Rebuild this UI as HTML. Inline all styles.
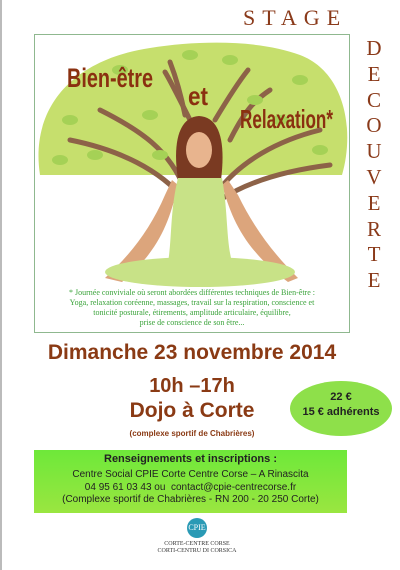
<!DOCTYPE html>
<html><head><meta charset="utf-8"><style>
body{margin:0;width:400px;height:570px;background:#fff;position:relative;overflow:hidden;font-family:"Liberation Sans",sans-serif}
.lb{position:absolute;left:0;top:0;width:2px;height:570px;background:#bbb}
.t{position:absolute;white-space:nowrap}
.br{color:#8a3a14;font-weight:bold}
</style></head><body>
<div class="lb"></div>
<div class="t" style="left:243px;top:5px;font-family:'Liberation Serif',serif;font-size:22px;letter-spacing:7px;color:#8a3a1a">STAGE</div>
<div class="t" style="left:364px;top:36px;width:20px;text-align:center;font-family:'Liberation Serif',serif;font-size:21px;line-height:25.8px;color:#8a3a1a">D<br>E<br>C<br>O<br>U<br>V<br>E<br>R<br>T<br>E</div>
<svg style="position:absolute;left:0;top:0" width="400" height="340">
<rect x="34.5" y="34.5" width="315" height="298" fill="#fff" stroke="#8fb88f" stroke-width="1"/>
<path d="M40 175 C30 110 70 60 150 48 C200 40 260 40 300 55 C345 72 355 130 342 175 Z" fill="#c6df6d"/>
<g stroke="#8d6248" stroke-width="5" fill="none" stroke-linecap="round">
<path d="M185 190 C170 150 140 130 100 110"/><path d="M185 200 C160 170 120 150 70 140"/>
<path d="M190 120 C180 100 170 80 165 72"/><path d="M215 120 C230 95 240 80 248 70"/>
<path d="M215 195 C240 160 280 140 320 130"/><path d="M220 200 C250 180 290 170 330 165"/>
<path d="M185 115 C180 90 175 75 170 62"/><path d="M230 140 C245 110 255 100 270 90"/>
</g>
<g fill="#a5d156">
<ellipse cx="70" cy="120" rx="8" ry="5"/><ellipse cx="95" cy="155" rx="8" ry="5"/><ellipse cx="120" cy="70" rx="8" ry="5"/>
<ellipse cx="190" cy="55" rx="8" ry="5"/><ellipse cx="230" cy="60" rx="8" ry="5"/><ellipse cx="300" cy="80" rx="8" ry="5"/>
<ellipse cx="320" cy="150" rx="8" ry="5"/><ellipse cx="150" cy="115" rx="8" ry="5"/><ellipse cx="280" cy="120" rx="8" ry="5"/>
<ellipse cx="60" cy="160" rx="8" ry="5"/><ellipse cx="255" cy="100" rx="8" ry="5"/><ellipse cx="160" cy="155" rx="8" ry="5"/>
</g>
<path d="M178 180 C172 140 180 117 199 116 C219 117 226 140 221 180 Z" fill="#7a3a22"/>
<ellipse cx="199" cy="150" rx="13" ry="18" fill="#e8b48e"/>
<path d="M105 278 C130 255 150 230 165 195 L172 180 L178 185 C170 220 160 250 122 282 Z" fill="#dca57c"/>
<path d="M298 278 C275 255 255 230 238 195 L228 180 L222 185 C232 220 245 250 288 282 Z" fill="#dca57c"/>
<path d="M178 178 L222 178 C228 210 226 240 232 262 L168 262 C172 240 170 210 178 178 Z" fill="#c8e287"/>
<ellipse cx="200" cy="272" rx="95" ry="15" fill="#c8e287"/>
<g font-family="Liberation Sans" font-weight="bold" fill="#8a3010" lengthAdjust="spacingAndGlyphs">
<text x="67" y="87" font-size="27" textLength="86" lengthAdjust="spacingAndGlyphs">Bien-être</text>
<text x="188" y="105" font-size="26" textLength="20" lengthAdjust="spacingAndGlyphs">et</text>
<text x="240" y="128" font-size="26" textLength="93" lengthAdjust="spacingAndGlyphs">Relaxation*</text>
</g>
<g font-family="Liberation Serif" font-size="8" fill="#3aa33a" text-anchor="middle">
<text x="192" y="295">* Journée conviviale où seront abordées différentes techniques de Bien-être :</text>
<text x="192" y="305">Yoga, relaxation coréenne, massages, travail sur la respiration, conscience et</text>
<text x="192" y="315">tonicité posturale, étirements, amplitude articulaire, équilibre,</text>
<text x="192" y="325">prise de conscience de son être...</text>
</g>
</svg>
<div class="t br" style="left:0;width:384px;text-align:center;top:341px;font-size:21px">Dimanche 23 novembre 2014</div>
<div class="t br" style="left:0;width:384px;text-align:center;top:375px;font-size:20px">10h –17h</div>
<div class="t br" style="left:0;width:384px;text-align:center;top:399px;font-size:21px">Dojo à Corte</div>
<div class="t br" style="left:0;width:384px;text-align:center;top:429px;font-size:8px">(complexe sportif de Chabrières)</div>
<div style="position:absolute;left:290px;top:381px;width:102px;height:55px;border-radius:50%;background:#8ee04a"></div>
<div class="t" style="left:290px;top:390px;width:102px;text-align:center;font-size:11px;font-weight:bold;line-height:15px;color:#222">22 €<br>15 € adhérents</div>
<div style="position:absolute;left:34px;top:450px;width:313px;height:63px;background:linear-gradient(#6ee83a,#9ae640)"></div>
<div class="t" style="left:34px;width:313px;text-align:center;top:453px;font-size:11px;font-weight:bold;color:#222">Renseignements et inscriptions :</div>
<div class="t" style="left:34px;width:313px;text-align:center;top:469px;font-size:10px;color:#222;line-height:12.5px">Centre Social CPIE Corte Centre Corse – A Rinascita<br>04 95 61 03 43 ou &nbsp;contact@cpie-centrecorse.fr<br>(Complexe sportif de Chabrières - RN 200 - 20 250 Corte)</div>
<div style="position:absolute;left:187px;top:518px;width:20px;height:20px;border-radius:50%;background:#2a9ab5"></div>
<div class="t" style="left:187px;top:523px;width:20px;text-align:center;font-family:'Liberation Serif',serif;font-size:8px;color:#fff">CPIE</div>
<div class="t" style="left:0;width:394px;text-align:center;top:541px;font-family:'Liberation Serif',serif;font-size:6px;color:#333;line-height:7px">CORTE-CENTRE CORSE<br>CORTI-CENTRU DI CORSICA</div>
</body></html>
